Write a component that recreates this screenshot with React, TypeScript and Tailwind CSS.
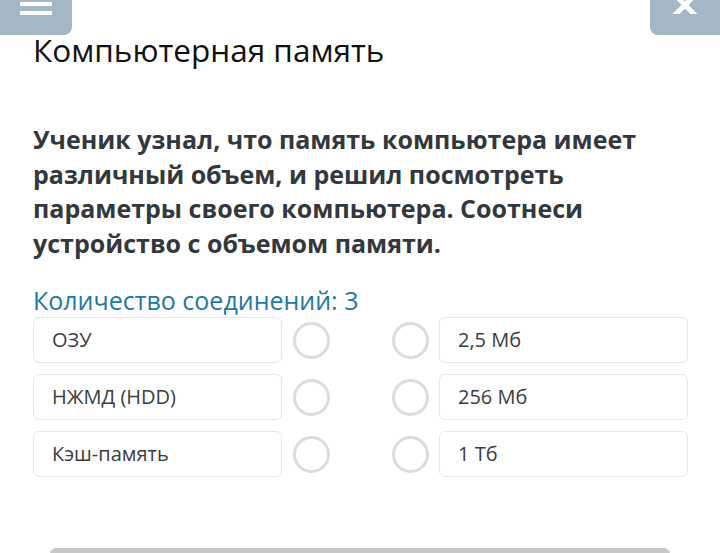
import React from 'react';

const leftItems = ['ОЗУ', 'НЖМД (HDD)', 'Кэш-память'];
const rightItems = ['2,5 Мб', '256 Мб', '1 Тб'];

const Dot: React.FC = () => (
  <div className="w-[37px] h-[37px] rounded-full border-[3px] border-[#dcdcdc] bg-white" />
);

const Card: React.FC<{ text: string }> = ({ text }) => (
  <div className="w-[249px] h-[46px] flex items-center pl-[18px] bg-white border border-[#e2e8ec] rounded-[6px] text-[20px] text-[#3a3d40]">
    {text}
  </div>
);

const App: React.FC = () => {
  return (
    <div className="w-[720px] h-[553px] bg-white overflow-hidden relative" style={{ fontFamily: '"Open Sans", sans-serif' }}>
      {/* top buttons */}
      <div className="flex justify-between h-[35px]">
        <div className="w-[72px] h-[35px] bg-[#a3b7c4] rounded-br-[8px] flex flex-col items-center pt-[2px] gap-[5px]">
          <div className="w-[32px] h-[4px] bg-white" />
          <div className="w-[32px] h-[4px] bg-white" />
        </div>
        <div className="w-[70px] h-[35px] bg-[#a3b7c4] rounded-bl-[8px] flex justify-center">
          <svg width="34" height="20" viewBox="0 0 34 20" className="-mt-[6px]">
            <path d="M6 0 L17 11 L28 0 M6 22 L17 11 L28 22" stroke="white" strokeWidth="5" fill="none" />
          </svg>
        </div>
      </div>

      <div className="pl-[33px] pr-[20px]">
        <h1 className="-mt-[3px] text-[31.5px] leading-[36px] text-[#111]">Компьютерная память</h1>

        <p className="mt-[54px] text-[25px] leading-[34.5px] font-bold text-[#33383d] w-[660px]">
          Ученик узнал, что память компьютера имеет различный объем, и решил посмотреть параметры своего компьютера. Соотнеси устройство с объемом памяти.
        </p>

        <div className="mt-[24px] text-[25px] leading-[32px] text-[#2278a8]">Количество соединений: 3</div>

        <div className="mt-[1px] flex flex-col gap-[11px]">
          {leftItems.map((l, i) => (
            <div key={i} className="flex items-center">
              <Card text={l} />
              <div className="ml-[11px]"><Dot /></div>
              <div className="ml-[62px]"><Dot /></div>
              <div className="ml-[10px]"><Card text={rightItems[i]} /></div>
            </div>
          ))}
        </div>
      </div>

      <div className="absolute left-[50px] right-[50px] top-[548px] h-[10px] bg-[#c8c8c8] rounded-t-[6px]" />
    </div>
  );
};

export default App;
